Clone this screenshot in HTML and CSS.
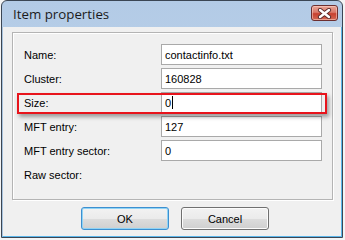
FILE: index.html
```html
<!DOCTYPE html>
<html lang="en">
<head>
  <meta charset="UTF-8" />
  <title>Item properties</title>
  <link rel="stylesheet" href="styles.css">
</head>
<body>
  <div class="window">
    <div class="titlebar">
      <span class="title">Item properties</span>
      <button class="close" aria-label="Close">
        <svg width="15" height="11" viewBox="0 0 15 11">
          <path d="M3 2 L12 9 M12 2 L3 9" stroke="#5a2a2a" stroke-width="4.2" stroke-linecap="round" />
          <path d="M3 2 L12 9 M12 2 L3 9" stroke="#ffffff" stroke-width="2.4" stroke-linecap="round" />
        </svg>
      </button>
    </div>
    <div class="client">
      <div class="group">
        <div class="row">
          <span class="label">Name:</span>
          <div class="field">contactinfo.txt</div>
        </div>
        <div class="row">
          <span class="label">Cluster:</span>
          <div class="field">160828</div>
        </div>
        <div class="row marked">
          <span class="label">Size:</span>
          <div class="field">0<span class="caret"></span></div>
        </div>
        <div class="row">
          <span class="label">MFT entry:</span>
          <div class="field">127</div>
        </div>
        <div class="row">
          <span class="label">MFT entry sector:</span>
          <div class="field">0</div>
        </div>
        <div class="row">
          <span class="label">Raw sector:</span>
        </div>
      </div>
      <div class="actions">
        <button class="btn default">OK</button>
        <button class="btn">Cancel</button>
      </div>
    </div>
  </div>
</body>
</html>
```

FILE: styles.css
```css
body {
  margin: 0;
  background-color: #f4f4f4;
  font-family: "Liberation Sans", Arial, sans-serif;
  font-size: 11px;
  color: #000000;
}
.window {
  margin-left: 1px;
  width: 342px;
  height: 238px;
  box-sizing: border-box;
  border: 1px solid #3b4654;
  border-radius: 6px 6px 0 0;
  background: linear-gradient(to bottom, #b3cbe6, #c3d6ec);
  display: flex;
  flex-direction: column;
}
.titlebar {
  height: 26px;
  display: flex;
  align-items: center;
  justify-content: space-between;
  padding: 0 4px 0 11px;
}
.title {
  font-family: "Open Sans", "Liberation Sans", sans-serif;
  font-size: 13.3px;
  color: #1b1b1b;
  margin-top: -1px;
}
.close {
  width: 27px;
  height: 16px;
  margin-top: -2px;
  padding: 0;
  border: 1px solid #6d2f2f;
  border-radius: 3px;
  background: linear-gradient(to bottom, #eaa697 0%, #d9796a 45%, #c7402f 55%, #d46a55 100%);
  box-shadow: inset 0 0 0 1px rgba(255, 220, 210, 0.5);
  display: flex;
  align-items: center;
  justify-content: center;
}
.client {
  flex: 1;
  background-color: #f0f0f0;
  border-left: 1px solid #aac4de;
  border-right: 1px solid #5cb6ea;
  border-bottom: 1px solid #5cb6ea;
  padding: 5px 0 0 9px;
}
.group {
  width: 321px;
  height: 168px;
  box-sizing: border-box;
  border: 1px solid #b4b4b4;
  box-shadow: 1px 1px 0 #ffffff, inset 1px 1px 0 #ffffff;
  padding: 11px 10px 0 11px;
  display: flex;
  flex-direction: column;
  gap: 3px;
}
.row {
  display: flex;
  align-items: center;
  height: 21px;
}
.label {
  width: 137px;
}
.field {
  width: 161px;
  height: 21px;
  box-sizing: border-box;
  background-color: #ffffff;
  border: 1px solid #a9a9a9;
  padding: 0 3px;
  display: flex;
  align-items: center;
}
.caret {
  display: inline-block;
  width: 1px;
  height: 13px;
  background-color: #000000;
  margin-left: 1px;
}
.marked {
  position: relative;
}
.marked::after {
  content: "";
  position: absolute;
  left: -7px;
  right: -5px;
  top: 1px;
  height: 21px;
  box-sizing: border-box;
  border: 2px solid #e8141c;
  box-shadow: 2px 3px 4px rgba(0, 0, 0, 0.35);
}
.actions {
  display: flex;
  justify-content: center;
  gap: 12px;
  margin-top: 7px;
  padding-right: 3px;
}
.btn {
  width: 88px;
  height: 23px;
  padding: 0;
  font-family: "Liberation Sans", Arial, sans-serif;
  font-size: 11px;
  color: #000000;
  border: 1px solid #707070;
  border-radius: 3px;
  background: linear-gradient(to bottom, #f2f2f2 0%, #ebebeb 50%, #dddddd 51%, #cfcfcf 100%);
  box-shadow: inset 0 0 0 1px #fcfcfc;
}
.btn.default {
  border-color: #3c8fd0;
  box-shadow: inset 0 0 0 1px #8fd3f5;
}
```
